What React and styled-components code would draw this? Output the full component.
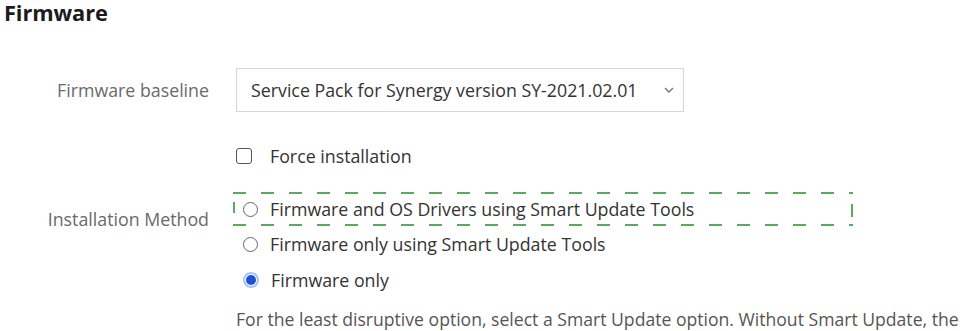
import React from "react";
import styled, { createGlobalStyle } from "styled-components";

const GlobalStyle = createGlobalStyle`
  html, body { margin: 0; padding: 0; background: #ffffff; overflow: hidden; }
  body { font-family: "Open Sans", "Liberation Sans", sans-serif; }
`;

const Page = styled.div`
  width: 975px;
  height: 331px;
  overflow: hidden;
  padding-left: 4px;
  box-sizing: border-box;
`;

const Title = styled.h2`
  margin: 0;
  font-size: 21.8px;
  line-height: 26px;
  font-weight: 700;
  color: #1b1b1b;
  letter-spacing: -0.1px;
`;

const Form = styled.div`
  display: grid;
  grid-template-columns: 205px 1fr;
  column-gap: 27px;
  margin-top: 42px;
`;

const Label = styled.div`
  text-align: right;
  font-size: 17.8px;
  color: #6a6a6a;
  line-height: 24px;
  white-space: nowrap;
  align-self: ${(p) => (p.$center ? "center" : "start")};
  margin-top: ${(p) => p.$offset || 0}px;
`;

const Select = styled.div`
  width: 448px;
  height: 44px;
  box-sizing: border-box;
  border: 1px solid #d6d6d6;
  display: flex;
  align-items: center;
  justify-content: space-between;
  padding: 0 8px 0 14px;
  font-size: 17.8px;
  color: #333;
`;

const Controls = styled.div`
  display: flex;
  flex-direction: column;
  grid-column: 2;
  margin-top: ${(p) => p.$top || 0}px;
`;

const Row = styled.label`
  display: flex;
  align-items: center;
  gap: 12px;
  height: ${(p) => p.$h || 36}px;
  padding-left: ${(p) => p.$pad ?? 7}px;
  font-size: 17.8px;
  color: #333;
  white-space: nowrap;
`;

const Checkbox = styled.span`
  width: 14px;
  height: 14px;
  border: 1.5px solid #555;
  border-radius: 3px;
  flex: none;
  margin-right: 6px;
`;

const Radio = styled.span`
  width: 13px;
  height: 13px;
  border-radius: 50%;
  border: 1.3px solid ${(p) => (p.$checked ? "#a9c2ee" : "#666")};
  flex: none;
  display: flex;
  align-items: center;
  justify-content: center;
  box-sizing: content-box;
  ${(p) =>
    p.$checked &&
    `
    width: 12px; height: 12px; border-width: 2px; background: #fff;
    &::after { content: ""; width: 10px; height: 10px; border-radius: 50%; background: #1d50d6; }
  `}
`;

const Highlight = styled.div`
  position: relative;
  margin-left: -3px;
  width: 620px;
  height: 34px;
  padding-left: 10px;
  box-sizing: border-box;
  display: flex;
  align-items: center;
  background-image: repeating-linear-gradient(
      to right,
      #5aa862 0 13px,
      transparent 13px 28px
    ),
    repeating-linear-gradient(to right, #5aa862 0 13px, transparent 13px 28px);
  background-size: 100% 2px, 100% 2px;
  background-position: 0 0, 0 100%;
  background-repeat: no-repeat;
  &::before,
  &::after {
    content: "";
    position: absolute;
    width: 2px;
    background: #5aa862;
  }
  &::before { left: 0; top: 10px; height: 11px; }
  &::after { right: 0; top: 12px; height: 13px; }
`;

const Help = styled.p`
  margin: 9px 0 0 0;
  font-size: 17.6px;
  line-height: 24px;
  color: #555;
  white-space: nowrap;
`;

const Chevron = () => (
  <svg width="12" height="8" viewBox="0 0 12 8" aria-hidden="true">
    <path d="M2 2 L6 6 L10 2" fill="none" stroke="#777" strokeWidth="1.4" />
  </svg>
);

export default function App() {
  return (
    <>
      <GlobalStyle />
      <Page>
        <Title>Firmware</Title>
        <Form>
          <Label $center>Firmware baseline</Label>
          <Select>
            <span>Service Pack for Synergy version SY-2021.02.01</span>
            <Chevron />
          </Select>

          <Controls $top={32}>
            <Row $h={24} $pad={0}>
              <Checkbox />
              Force installation
            </Row>
          </Controls>

          <Label $offset={39}>Installation Method</Label>
          <Controls $top={24}>
            <Highlight>
              <Row $h={34} $pad={0}>
                <Radio />
                Firmware and OS Drivers using Smart Update Tools
              </Row>
            </Highlight>
            <Row>
              <Radio />
              Firmware only using Smart Update Tools
            </Row>
            <Row>
              <Radio $checked />
              Firmware only
            </Row>
            <Help>
              For the least disruptive option, select a Smart Update option. Without Smart Update, the
            </Help>
          </Controls>
        </Form>
      </Page>
    </>
  );
}
